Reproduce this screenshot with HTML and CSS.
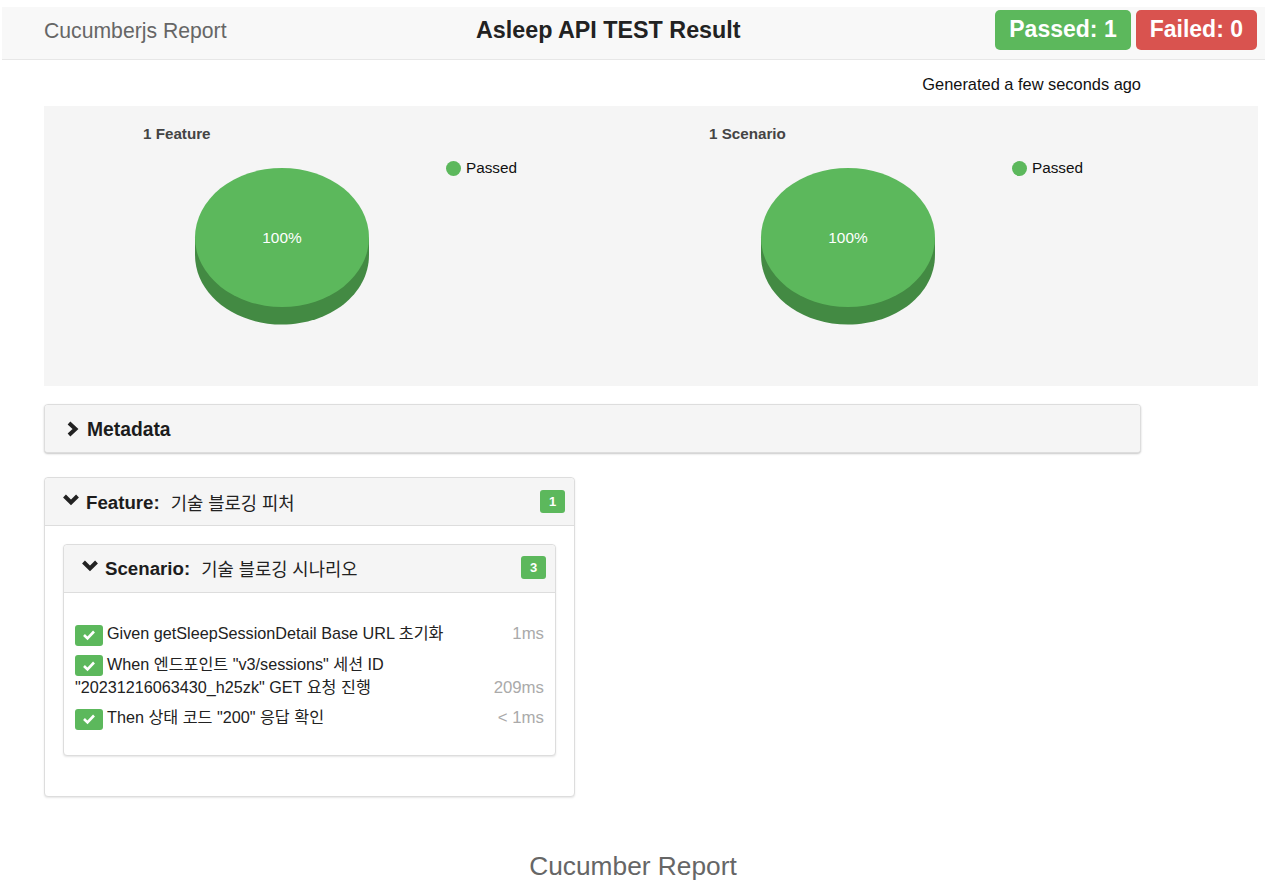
FILE: index.html
```html
<!DOCTYPE html>
<html lang="ko">
<head>
<meta charset="utf-8">
<title>Cucumber Report</title>
<link rel="stylesheet" href="styles.css">
</head>
<body>
<header class="navbar">
  <div class="brand">Cucumberjs Report</div>
  <h1 class="report-title">Asleep API TEST Result</h1>
  <div class="totals">
    <span class="total passed">Passed: 1</span>
    <span class="total failed">Failed: 0</span>
  </div>
</header>
<main class="content">
  <p class="generated">Generated a few seconds ago</p>
  <section class="charts">
    <div class="chart">
      <h2 class="chart-title">1 Feature</h2>
      <div class="chart-body">
        <svg class="pie" width="176" height="160" viewBox="0 0 176 160">
          <path class="pie-side" d="M1 72 V89 C1 128 40 158.500 88 158.500 C136 158.500 175 128 175 89 V72 Z"/>
          <ellipse class="pie-top" cx="88" cy="71.500" rx="87" ry="69.500"/>
          <text class="pie-label" x="88" y="77" text-anchor="middle">100%</text>
        </svg>
        <div class="legend"><span class="legend-dot"></span>Passed</div>
      </div>
    </div>
    <div class="chart">
      <h2 class="chart-title">1 Scenario</h2>
      <div class="chart-body">
        <svg class="pie" width="176" height="160" viewBox="0 0 176 160">
          <path class="pie-side" d="M1 72 V89 C1 128 40 158.500 88 158.500 C136 158.500 175 128 175 89 V72 Z"/>
          <ellipse class="pie-top" cx="88" cy="71.500" rx="87" ry="69.500"/>
          <text class="pie-label" x="88" y="77" text-anchor="middle">100%</text>
        </svg>
        <div class="legend"><span class="legend-dot"></span>Passed</div>
      </div>
    </div>
  </section>
  <section class="panel metadata">
    <div class="panel-heading meta-heading">
      <svg class="chev chev-right" width="14" height="18" viewBox="0 0 14 18"><path d="M3 3 L9.500 9 L3 15" /></svg>
      <strong>Metadata</strong>
    </div>
  </section>
  <section class="panel feature">
    <div class="panel-heading feature-heading">
      <svg class="chev" width="18" height="14" viewBox="0 0 18 14"><path d="M2.500 3 L9 9.500 L15.500 3" /></svg>
      <strong>Feature:</strong><span class="name">기술 블로깅 피처</span>
      <span class="count">1</span>
    </div>
    <div class="feature-body">
      <section class="panel scenario">
        <div class="panel-heading scenario-heading">
          <svg class="chev" width="18" height="14" viewBox="0 0 18 14"><path d="M2.500 3 L9 9.500 L15.500 3" /></svg>
          <strong>Scenario:</strong><span class="name">기술 블로깅 시나리오</span>
          <span class="count">3</span>
        </div>
        <ul class="steps">
          <li class="step">
            <div class="step-text"><span class="check"><svg width="14" height="12" viewBox="0 0 14 12"><path d="M2 6 L5.500 9.500 L12 2.500"/></svg></span>Given getSleepSessionDetail Base URL 초기화</div>
            <span class="duration">1ms</span>
          </li>
          <li class="step">
            <div class="step-text"><span class="check"><svg width="14" height="12" viewBox="0 0 14 12"><path d="M2 6 L5.500 9.500 L12 2.500"/></svg></span>When 엔드포인트 "v3/sessions" 세션 ID "20231216063430_h25zk" GET 요청 진행</div>
            <span class="duration">209ms</span>
          </li>
          <li class="step">
            <div class="step-text"><span class="check"><svg width="14" height="12" viewBox="0 0 14 12"><path d="M2 6 L5.500 9.500 L12 2.500"/></svg></span>Then 상태 코드 "200" 응답 확인</div>
            <span class="duration">&lt; 1ms</span>
          </li>
        </ul>
      </section>
    </div>
  </section>
</main>
<footer class="caption">Cucumber Report</footer>
</body>
</html>
```
FILE: styles.css
```css
* { box-sizing: border-box; }
html, body { margin: 0; padding: 0; }
body {
  background: #fff;
  color: #222;
  font-family: "Liberation Sans", "Noto Sans CJK KR", sans-serif;
  overflow: hidden;
}
.navbar {
  display: flex;
  align-items: center;
  height: 53px;
  margin: 7px 15px 0 2px;
  padding: 0 8px 6px 0;
  background: #f8f8f8;
  border-bottom: 1px solid #e7e7e7;
}
.brand {
  flex: 0 0 474px;
  padding: 1px 0 0 42px;
  font-size: 21.200px;
  color: #666;
}
.report-title {
  margin: 0;
  font-size: 23.300px;
  line-height: 30px;
  font-weight: 700;
  color: #222;
}
.totals { margin-left: auto; display: flex; gap: 5px; }
.total {
  display: block;
  height: 40px;
  padding: 0 14px;
  border-radius: 5px;
  color: #fff;
  font-size: 23px;
  font-weight: 700;
  line-height: 38px;
}
.passed { background: #5cb85c; }
.failed { background: #d9534f; }
.content { margin: 0 22px 0 44px; }
.generated {
  width: 1097px;
  margin: 0;
  height: 46px;
  padding-top: 15px;
  text-align: right;
  font-size: 16.400px;
  line-height: 19px;
  color: #111;
}
.charts {
  display: flex;
  height: 280px;
  margin-bottom: 18px;
  padding-top: 18px;
  background: #f5f5f5;
}
.chart { flex: 0 0 566px; padding-left: 99px; }
.chart-title {
  margin: 0 0 23px;
  font-size: 15.200px;
  line-height: 19px;
  font-weight: 700;
  color: #444;
}
.chart-body { display: flex; align-items: flex-start; padding-left: 51px; }
.pie { display: block; flex: none; }
.pie-side { fill: #438a43; }
.pie-top { fill: #5cb85c; }
.pie-label { fill: #fff; font-size: 15.400px; }
.legend {
  display: flex;
  align-items: center;
  gap: 5px;
  margin: -8px 0 0 76px;
  height: 20px;
  font-size: 15.300px;
  color: #111;
}
.legend-dot {
  width: 15px;
  height: 15px;
  border-radius: 50%;
  background: #5cb85c;
}
.panel {
  background: #fff;
  border: 1px solid #ddd;
  border-radius: 4px;
  box-shadow: 0 1px 2px rgba(0, 0, 0, .1);
}
.panel-heading {
  display: flex;
  align-items: center;
  background: #f5f5f5;
  color: #1c1c1c;
  font-size: 18.700px;
}
.panel-heading strong { font-weight: 700; padding-top: 2px; }
.metadata {
  width: 1097px;
  height: 49px;
  margin-bottom: 24px;
  overflow: hidden;
  box-shadow: 0 1px 2px rgba(0, 0, 0, .22);
}
.meta-heading { height: 100%; padding-left: 21px; font-size: 19.300px; }
.meta-heading .chev { margin-right: 7px; }
.feature { width: 531px; height: 320px; }
.feature-heading {
  height: 48px;
  padding: 0 9px 0 17px;
  border-bottom: 1px solid #ddd;
  border-radius: 4px 4px 0 0;
}
.scenario-heading {
  height: 48px;
  padding: 0 10px 2px 17px;
  border-bottom: 1px solid #ddd;
  border-radius: 4px 4px 0 0;
}
.chev { flex: none; margin-right: 6px; }
.chev path { fill: none; stroke: #222; stroke-width: 4; }
.feature-heading .chev, .scenario-heading .chev { margin-top: -4px; }
.name { margin-left: 11px; font-size: 17.700px; color: #222; }
.count {
  margin-left: auto;
  width: 25px;
  height: 23px;
  border-radius: 3px;
  background: #5cb85c;
  color: #fff;
  font-size: 13px;
  font-weight: 700;
  line-height: 23px;
  text-align: center;
}
.feature-body { padding: 18px 18px 0; }
.scenario { height: 212px; }
.steps { list-style: none; margin: 0; padding: 29px 11px 0; }
.step {
  display: flex;
  align-items: flex-end;
  justify-content: space-between;
  margin-bottom: 7.500px;
  font-size: 16.200px;
  line-height: 23px;
  color: #222;
}
.step-text { width: 400px; }
.check {
  display: inline-flex;
  align-items: center;
  justify-content: center;
  width: 28px;
  height: 21px;
  margin: -6px 4px -6px 0;
  border-radius: 3px;
  background: #5cb85c;
  vertical-align: -2px;
}
.check path { fill: none; stroke: #fff; stroke-width: 2.600; }
.duration { color: #aaa; font-size: 16.800px; }
.caption {
  margin-top: 54px;
  margin-right: 14px;
  text-align: center;
  font-size: 26.300px;
  line-height: 30px;
  color: #666;
}
.scenario-heading .count { margin-right: -1px; }
```
